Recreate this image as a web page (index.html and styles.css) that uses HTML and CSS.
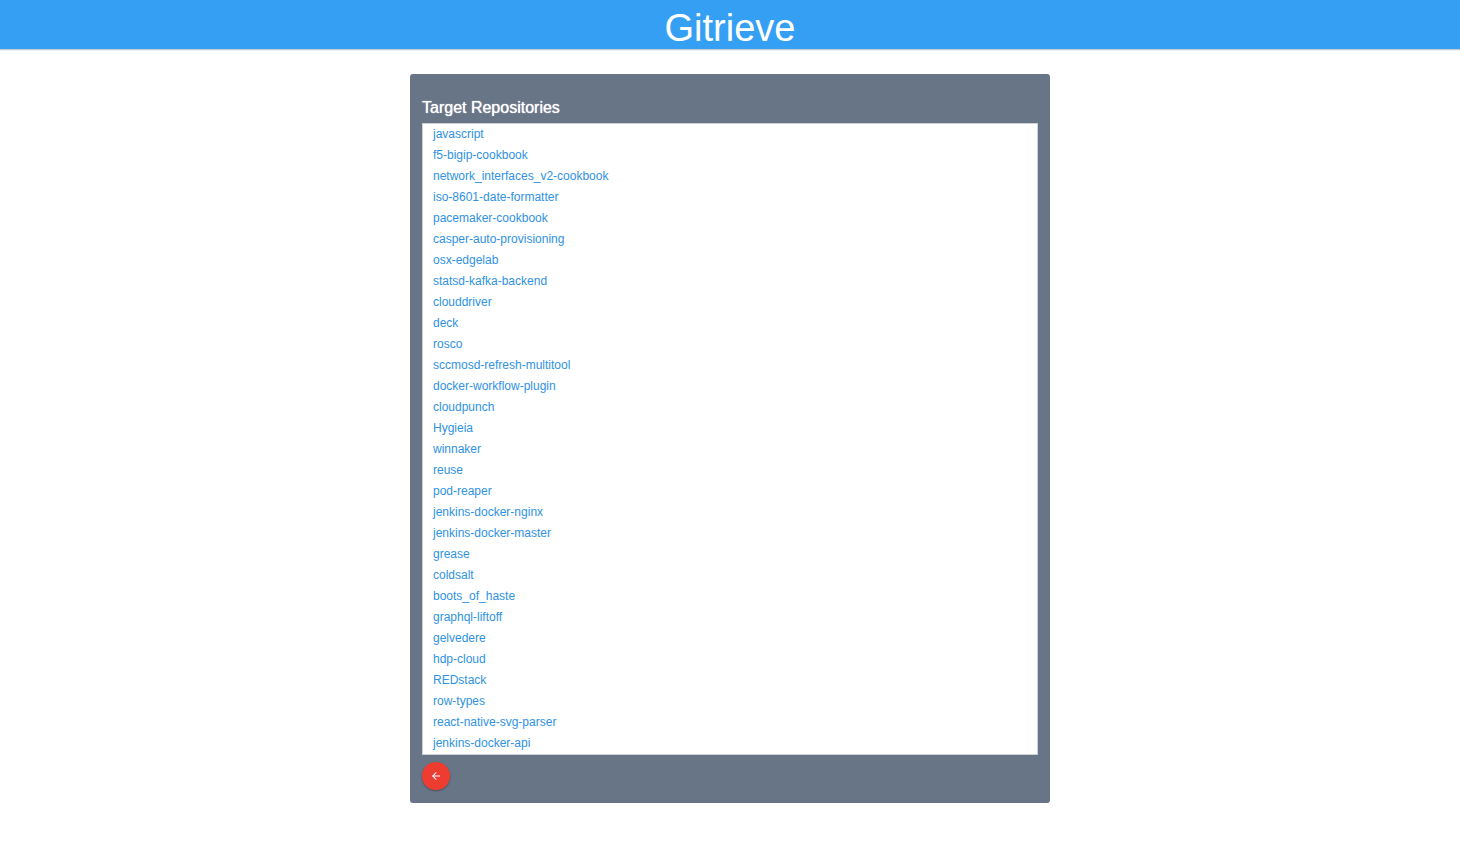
FILE: index.html
```html
<!DOCTYPE html>
<html lang="en">
<head>
<meta charset="utf-8">
<title>Gitrieve</title>
<link rel="stylesheet" href="styles.css">
</head>
<body>
<header class="app-header"><h1 class="app-title">Gitrieve</h1></header>
<main class="panel">
<h2 class="panel-title">Target Repositories</h2>
<ul class="repo-list">
<li><a class="repo-link" href="#">javascript</a></li>
<li><a class="repo-link" href="#">f5-bigip-cookbook</a></li>
<li><a class="repo-link" href="#">network_interfaces_v2-cookbook</a></li>
<li><a class="repo-link" href="#">iso-8601-date-formatter</a></li>
<li><a class="repo-link" href="#">pacemaker-cookbook</a></li>
<li><a class="repo-link" href="#">casper-auto-provisioning</a></li>
<li><a class="repo-link" href="#">osx-edgelab</a></li>
<li><a class="repo-link" href="#">statsd-kafka-backend</a></li>
<li><a class="repo-link" href="#">clouddriver</a></li>
<li><a class="repo-link" href="#">deck</a></li>
<li><a class="repo-link" href="#">rosco</a></li>
<li><a class="repo-link" href="#">sccmosd-refresh-multitool</a></li>
<li><a class="repo-link" href="#">docker-workflow-plugin</a></li>
<li><a class="repo-link" href="#">cloudpunch</a></li>
<li><a class="repo-link" href="#">Hygieia</a></li>
<li><a class="repo-link" href="#">winnaker</a></li>
<li><a class="repo-link" href="#">reuse</a></li>
<li><a class="repo-link" href="#">pod-reaper</a></li>
<li><a class="repo-link" href="#">jenkins-docker-nginx</a></li>
<li><a class="repo-link" href="#">jenkins-docker-master</a></li>
<li><a class="repo-link" href="#">grease</a></li>
<li><a class="repo-link" href="#">coldsalt</a></li>
<li><a class="repo-link" href="#">boots_of_haste</a></li>
<li><a class="repo-link" href="#">graphql-liftoff</a></li>
<li><a class="repo-link" href="#">gelvedere</a></li>
<li><a class="repo-link" href="#">hdp-cloud</a></li>
<li><a class="repo-link" href="#">REDstack</a></li>
<li><a class="repo-link" href="#">row-types</a></li>
<li><a class="repo-link" href="#">react-native-svg-parser</a></li>
<li><a class="repo-link" href="#">jenkins-docker-api</a></li>
</ul>
<button class="back-button" type="button" aria-label="Back">
<svg class="back-icon" viewBox="0 0 24 24" aria-hidden="true"><path d="M20 11H7.83l5.59-5.59L12 4l-8 8 8 8 1.41-1.41L7.83 13H20v-2z"/></svg>
</button>
</main>
</body>
</html>
```
FILE: styles.css
```css
body {
  margin: 0;
  background: #fff;
  font-family: "Liberation Sans", Arial, sans-serif;
}

.app-header {
  padding: 8px 16px 0;
  background: #359ff4;
  border-bottom: 1px solid #c3cdd6;
  box-shadow: 0 1px 0 #f0f0f0;
  text-align: center;
}

.app-title {
  margin: 0;
  color: #fff;
  font-size: 38px;
  font-weight: 400;
  line-height: 41px;
}

.panel {
  box-sizing: border-box;
  width: calc(100% - 32px);
  max-width: 640px;
  margin: 24px auto;
  padding: 24px 12px 13px;
  background: #687586;
  border-radius: 3px;
}

.panel-title {
  margin: 0 0 6px;
  color: #fff;
  font-size: 16px;
  font-weight: 400;
  line-height: 19px;
  text-shadow: 0 0 1px #fff;
}

.repo-list {
  margin: 0;
  padding: 0;
  list-style: none;
  background: #fff;
  border: 1px solid #ccd1d5;
}

.repo-link {
  display: block;
  padding: 0 10px;
  color: #2f92e2;
  font-size: 12px;
  line-height: 21px;
  text-decoration: none;
}

.back-button {
  display: flex;
  align-items: center;
  justify-content: center;
  width: 28px;
  height: 28px;
  margin-top: 7px;
  padding: 0;
  border: 0;
  border-radius: 50%;
  background: #ee3c30;
  box-shadow: 0 1px 2px rgba(0, 0, 0, 0.3);
}

.back-icon {
  width: 12px;
  height: 12px;
  fill: #fff;
}
```
